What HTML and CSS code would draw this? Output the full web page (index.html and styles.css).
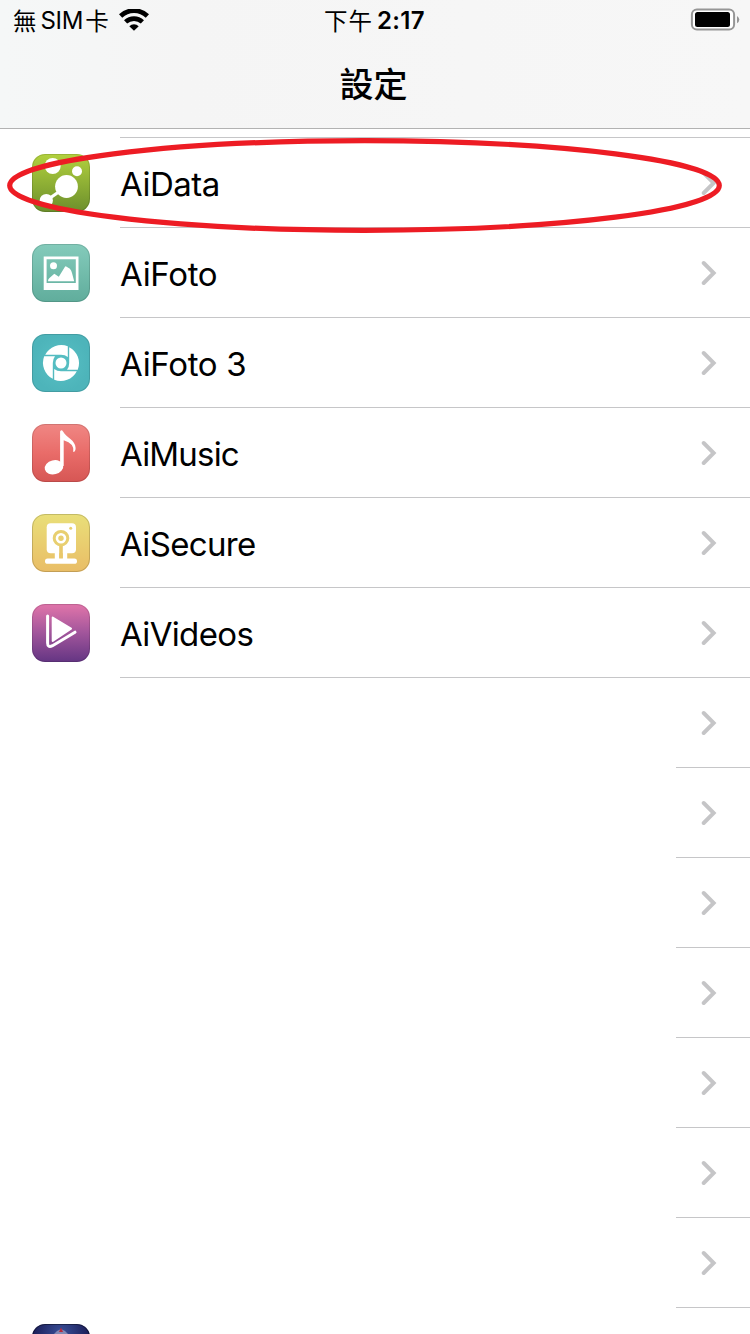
FILE: index.html
```html
<!DOCTYPE html>
<html lang="zh-Hant">
<head>
    <meta charset="UTF-8">
    <meta name="viewport" content="width=device-width, initial-scale=1.0">
    <title>設定</title>
    <link rel="stylesheet" href="styles.css">
</head>
<body>
    <svg class="defs" width="0" height="0">
        <symbol id="chevron" viewBox="0 0 16 26">
            <path d="M2.7 3 L12.7 13 L2.7 23" fill="none" stroke="#c5c5c7" stroke-width="3.9" stroke-linecap="round" stroke-linejoin="miter"/>
        </symbol>
    </svg>

    <header class="header">
        <!-- status bar -->
        <div class="status">
            <div class="carrier">
                <span class="carrier-name"><span class="cjk">無</span><span class="sim">SIM</span><span class="cjk">卡</span></span>
                <svg class="wifi" width="30" height="22" viewBox="0 0 30 22">
                    <path d="M1.6 7 A19.5 19.5 0 0 1 28.4 7" fill="none" stroke="#000" stroke-width="4.8"/>
                    <path d="M6.6 12.9 A12.3 12.3 0 0 1 23.4 12.9" fill="none" stroke="#000" stroke-width="4.6"/>
                    <path d="M15 21.8 L10.3 17.2 A6.8 6.8 0 0 1 19.7 17.2 Z"/>
                </svg>
            </div>
            <div class="time"><span class="cjk">下午</span><span class="clock">2:17</span></div>
            <svg class="battery" width="50" height="24" viewBox="0 0 50 24">
                <rect x="1.9" y="1.4" width="42.2" height="20.2" rx="5" fill="#fff" stroke="#969696" stroke-width="2"/>
                <rect x="5" y="4" width="35" height="15" rx="2.5"/>
                <path d="M47 8 Q49.3 9.5 49.3 11.5 Q49.3 13.8 47 15.2 Z" fill="#969696"/>
            </svg>
        </div>
        <h1 class="title">設定</h1>
    </header>

    <main class="list">
        <div class="row-tail"></div>

        <div class="row marked">
            <svg class="icon" viewBox="0 0 58 58">
                <linearGradient id="gData" x2="0" y2="1"><stop offset="0" stop-color="#b2d13e"/><stop offset="1" stop-color="#6c8f2c"/></linearGradient>
                <rect width="58" height="58" rx="13" fill="url(#gData)"/>
                <rect x=".5" y=".5" width="57" height="57" rx="12.5" fill="none" stroke="#000" stroke-opacity=".13"/>
                <path d="M14.5 46.5 L34.5 32.5" stroke="#fff" stroke-width="3.2"/>
                <g fill="#fff"><circle cx="34.5" cy="32.5" r="11.4"/><circle cx="45" cy="17.3" r="5"/><circle cx="20.7" cy="12" r="8"/><circle cx="14.3" cy="46.5" r="6.6"/></g>
            </svg>
            <div class="cell"><span class="name data">AiData</span><svg class="chevron"><use href="#chevron"/></svg></div>
            <!-- red marker ring over the first row -->
            <svg class="ring" width="718" height="98" viewBox="0 0 718 98">
                <ellipse cx="358.5" cy="48.5" rx="354.8" ry="44.8" fill="none" stroke="#ed1c24" stroke-width="5.2"/>
            </svg>
        </div>

        <div class="row">
            <svg class="icon" viewBox="0 0 58 58">
                <linearGradient id="gFoto" x2="0" y2="1"><stop offset="0" stop-color="#84cbbb"/><stop offset="1" stop-color="#60ad9c"/></linearGradient>
                <rect width="58" height="58" rx="13" fill="url(#gFoto)"/>
                <rect x=".5" y=".5" width="57" height="57" rx="12.5" fill="none" stroke="#000" stroke-opacity=".13"/>
                <path d="M11.7 12.5 H46.5 V46 H11.7 Z M14.6 15.3 V39 H43.8 V15.3 Z" fill="#fff" fill-rule="evenodd"/>
                <circle cx="21.5" cy="21.7" r="3.5" fill="#fff"/>
                <path d="M16 37.2 Q16 35.4 17.2 34.3 L22.3 29.8 L26.8 32.7 L33 22.7 Q33.4 22 34.2 22.5 L37.9 24.8 Q39.5 26.5 40 29 L42.2 37.2 Z" fill="#fff"/>
            </svg>
            <div class="cell"><span class="name foto">AiFoto</span><svg class="chevron"><use href="#chevron"/></svg></div>
        </div>

        <div class="row">
            <svg class="icon" viewBox="0 0 58 58">
                <radialGradient id="gFoto3"><stop offset="0" stop-color="#58c0c4"/><stop offset="1" stop-color="#4db4ba"/></radialGradient>
                <rect width="58" height="58" rx="13" fill="url(#gFoto3)"/>
                <rect x=".5" y=".5" width="57" height="57" rx="12.5" fill="none" stroke="#000" stroke-opacity=".13"/>
                <g fill="#fff">
                    <path id="blade" d="M13.2 20.8 A18.1 18.1 0 0 1 35.8 12.2 V23 Q33 20.8 29 20.8 Z"/>
                    <use href="#blade" transform="rotate(90 29 29)"/>
                    <use href="#blade" transform="rotate(180 29 29)"/>
                    <use href="#blade" transform="rotate(270 29 29)"/>
                    <circle cx="29" cy="29" r="5.5"/>
                </g>
            </svg>
            <div class="cell"><span class="name foto3">AiFoto 3</span><svg class="chevron"><use href="#chevron"/></svg></div>
        </div>

        <div class="row">
            <svg class="icon" viewBox="0 0 58 58">
                <linearGradient id="gMusic" x2="0" y2="1"><stop offset="0" stop-color="#f08784"/><stop offset=".5" stop-color="#e96c69"/><stop offset="1" stop-color="#d65654"/></linearGradient>
                <rect width="58" height="58" rx="13" fill="url(#gMusic)"/>
                <rect x=".5" y=".5" width="57" height="57" rx="12.5" fill="none" stroke="#000" stroke-opacity=".13"/>
                <ellipse cx="22" cy="43.3" rx="9.4" ry="7" transform="rotate(-14 22 43.3)" fill="#fff"/>
                <path d="M28.1 7.5 Q29.5 5 31 7.5 C34 13.5 43.6 16 43.6 24 Q43.6 27.7 41.3 28 Q42.8 19.5 31.7 16.2 V42 L28.1 41 Z" fill="#fff"/>
            </svg>
            <div class="cell"><span class="name music">AiMusic</span><svg class="chevron"><use href="#chevron"/></svg></div>
        </div>

        <div class="row">
            <svg class="icon" viewBox="0 0 58 58">
                <linearGradient id="gSecure" x2="0" y2="1"><stop offset="0" stop-color="#e9df79"/><stop offset="1" stop-color="#e9bd66"/></linearGradient>
                <rect width="58" height="58" rx="13" fill="url(#gSecure)"/>
                <rect x=".5" y=".5" width="57" height="57" rx="12.5" fill="none" stroke="#000" stroke-opacity=".16"/>
                <rect x="14.7" y="9.2" width="29.3" height="30" rx="4" fill="#fff"/>
                <path d="M25 38 V46 M33 38 V46" stroke="#fff" stroke-width="4.4"/>
                <path d="M29 31 V44.6" stroke="#e9c86b" stroke-width="3.6"/>
                <rect x="13" y="44.6" width="32" height="5.2" rx="2.6" fill="#fff"/>
                <circle cx="29" cy="24.2" r="6.8" fill="#fff" stroke="#e8cf70" stroke-width="3"/>
                <circle cx="29" cy="24.2" r="2.7" fill="#e8cf70"/>
                <circle cx="38.7" cy="14.3" r="1.5" fill="#e8cf70"/>
            </svg>
            <div class="cell"><span class="name secure">AiSecure</span><svg class="chevron"><use href="#chevron"/></svg></div>
        </div>

        <div class="row">
            <svg class="icon" viewBox="0 0 58 58">
                <linearGradient id="gVideos" x2="0" y2="1"><stop offset=".05" stop-color="#db72a8"/><stop offset=".5" stop-color="#a1559b"/><stop offset="1" stop-color="#643583"/></linearGradient>
                <rect width="58" height="58" rx="13" fill="url(#gVideos)"/>
                <rect x=".5" y=".5" width="57" height="57" rx="12.5" fill="none" stroke="#000" stroke-opacity=".13"/>
                <path d="M20.7 13.5 L39 24.7 L20.7 37 Z" fill="#fff" stroke="#fff" stroke-width="2" stroke-linejoin="round"/>
                <path d="M15.6 12 V39 Q15.6 44.2 20.5 41.7 L43 28.2" fill="none" stroke="#fff" stroke-width="3" stroke-linecap="round"/>
            </svg>
            <div class="cell"><span class="name videos">AiVideos</span><svg class="chevron"><use href="#chevron"/></svg></div>
        </div>

        <div class="row short"><div class="cell"><svg class="chevron"><use href="#chevron"/></svg></div></div>
        <div class="row short"><div class="cell"><svg class="chevron"><use href="#chevron"/></svg></div></div>
        <div class="row short"><div class="cell"><svg class="chevron"><use href="#chevron"/></svg></div></div>
        <div class="row short"><div class="cell"><svg class="chevron"><use href="#chevron"/></svg></div></div>
        <div class="row short"><div class="cell"><svg class="chevron"><use href="#chevron"/></svg></div></div>
        <div class="row short"><div class="cell"><svg class="chevron"><use href="#chevron"/></svg></div></div>
        <div class="row short"><div class="cell"><svg class="chevron"><use href="#chevron"/></svg></div></div>

        <div class="row">
            <svg class="icon" viewBox="0 0 58 58">
                <radialGradient id="gGame" cx=".5" cy=".15" r=".6"><stop offset="0" stop-color="#394f98"/><stop offset="1" stop-color="#15124a"/></radialGradient>
                <rect width="58" height="58" rx="13" fill="url(#gGame)"/>
                <path d="M22 10 L25 7 L29 5 L33 7 L36 10 Z" fill="#8288b4"/>
                <path d="M27 8 L29 3.5 L31 8 Z" fill="#b62a3c"/>
                <rect x=".5" y=".5" width="57" height="57" rx="12.5" fill="none" stroke="#000" stroke-opacity=".4"/>
            </svg>
        </div>
    </main>
</body>
</html>
```

FILE: styles.css
```css
* {
    box-sizing: border-box;
}
body {
    margin: 0;
    width: 750px;
    height: 1334px;
    overflow: hidden;
    background: #fff;
    color: #000;
    font-family: Inter, "Noto Sans CJK TC", sans-serif;
}
svg {
    display: block;
    flex: none;
}
.defs {
    position: absolute;
}
.header {
    height: 129px;
    background: linear-gradient(90deg, #f5f7f7, #f5f5f5 25%, #f7f7f7);
    border-bottom: 1px solid #b2b2b2;
}
.status {
    display: grid;
    grid-template-columns: 1fr auto 1fr;
    height: 40px;
    align-items: center;
    padding: 0 10px 0 13px;
    font-size: 24px;
    line-height: 38px;
}
.carrier, .carrier-name, .time {
    display: flex;
    align-items: center;
}
.carrier {
    gap: 10px;
}
.cjk {
    font-family: "Noto Sans CJK TC", sans-serif;
    font-size: 23.5px;
    line-height: 36px;
}
.sim {
    margin: 0 2px 0 4px;
    padding-top: 2px;
    letter-spacing: -0.3px;
}
.time {
    margin-right: 4px;
}
.time .cjk {
    letter-spacing: 1px;
}
.clock {
    margin-left: 4px;
    padding-top: 2px;
    font-weight: 600;
    letter-spacing: 0.3px;
}
.battery {
    justify-self: end;
}
.title {
    margin: 15px 3px 0 0;
    font-family: "Noto Sans CJK TC", sans-serif;
    font-size: 34px;
    line-height: 56px;
    font-weight: 500;
    text-align: center;
}
.row-tail {
    height: 9px;
    margin-left: 120px;
    border-bottom: 1px solid #c6c6c8;
}
.row {
    display: flex;
    height: 90px;
    padding-left: 32px;
    position: relative;
}
.icon {
    width: 58px;
    height: 58px;
    margin: 16px 30px 0 0;
}
.cell {
    display: flex;
    flex: 1;
    align-items: center;
    justify-content: space-between;
    padding-right: 33px;
    border-bottom: 1px solid #c6c6c8;
}
.short {
    padding-left: 676px;
}
.short .cell {
    justify-content: flex-end;
}
.name {
    font-size: 33px;
    line-height: 40px;
    margin-top: 2px;
}
.data {
    letter-spacing: -0.5px;
}
.foto, .foto3 {
    letter-spacing: -0.3px;
}
.music {
    letter-spacing: -0.8px;
}
.secure, .videos {
    letter-spacing: -0.65px;
}
.chevron {
    width: 16px;
    height: 26px;
    margin-top: 1px;
}
.ring {
    position: absolute;
    left: 6px;
    top: -1px;
}
```
